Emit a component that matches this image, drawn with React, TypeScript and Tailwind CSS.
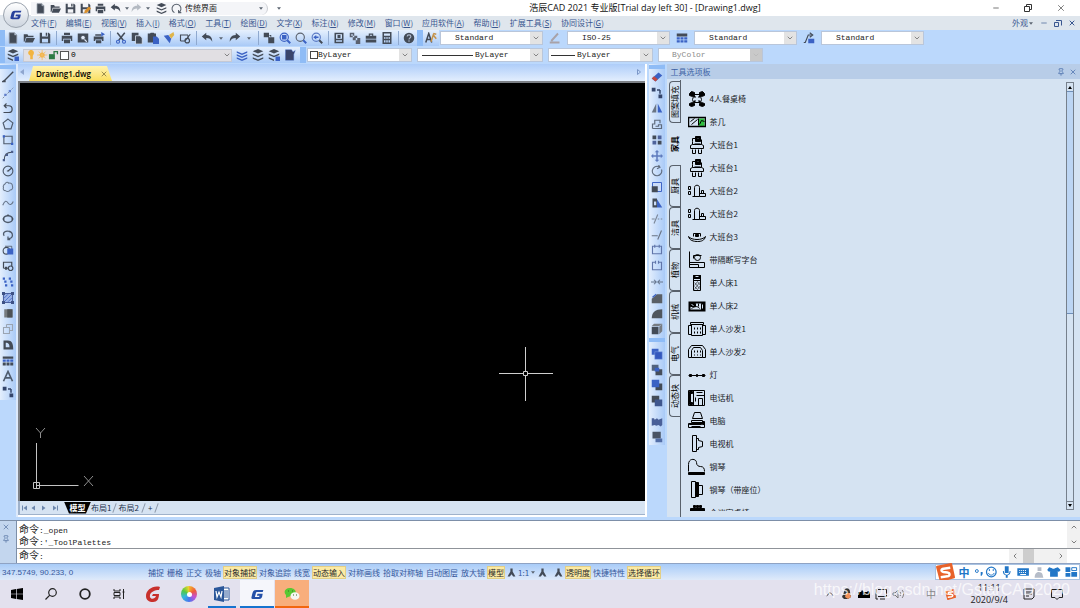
import type { ReactNode } from 'react';
import { ChevronDown, ChevronLeft, ChevronRight, ChevronUp, Minus, X, Pin } from 'lucide-react';

const D = '#434b57';
const B = '#3b62c4';

/* ---------- toolbar glyphs, drawn on a 16 x 16 grid ---------- */
const GLYPHS: Record<string, ReactNode> = {
  file: <path d="M3 1h7l3 3v11H3z M10 1v3h3" fill={D} stroke="#8a93a0" />,
  open: <path d="M1 3h5l1 2h7v2H4l-2 6H1z M4.500 8H16l-3 6H2.500z" fill={D} />,
  save: <path d="M1 1h3v5h8V1h1l2 2v12H1z M4 9v5h8V9z M9 1h2v4H9z" fill={D} fillRule="evenodd" />,
  saveas: (
    <>
      <path d="M1 1h3v5h8V1h1l2 2v12H1z M4 9v5h8V9z" fill={D} fillRule="evenodd" />
      <path d="M6 15l1-4 6-6 3 3-6 6z" fill="#d9902c" />
    </>
  ),
  print: <path d="M4 1h8v3H4z M1 5h14v7h-2V9H3v3H1z M4 10h8v5H4z" fill={D} />,
  preview: (
    <>
      <path d="M1 2h14v12H1z" fill={D} />
      <circle cx="8" cy="7.500" r="3" fill="#dfe9f8" stroke={D} />
      <path d="M10 10l3 3" stroke="#dfe9f8" strokeWidth="1.500" />
    </>
  ),
  plot: (
    <>
      <path d="M3 3h8v2H3z M1 6h13v6h-2v-2H3v2H1z M4 11h7v4H4z" fill={D} />
      <path d="M11 0l5 3-5 3z" fill={B} />
    </>
  ),
  scissors: (
    <>
      <path d="M3 1l8 10M13 1L5 11" stroke={D} strokeWidth="2" fill="none" />
      <circle cx="4" cy="13" r="2" stroke={B} strokeWidth="1.500" fill="none" />
      <circle cx="12" cy="13" r="2" stroke={B} strokeWidth="1.500" fill="none" />
    </>
  ),
  copy: (
    <>
      <path d="M1 1h9v11H1z" fill={D} />
      <path d="M6 5h6l3 3v8H6z" fill={D} stroke="#dfe9f8" />
    </>
  ),
  paste: (
    <>
      <path d="M1 2h3l1-1h4l1 1h2v12H1z" fill={D} />
      <path d="M8 6h5l3 3v7H8z" fill={B} />
    </>
  ),
  brush: (
    <>
      <path d="M1 5l6-1 4 5-2 6z" fill={B} />
      <path d="M8 4l6-4 1 4-4 5z" fill="#e0b54a" />
    </>
  ),
  block: (
    <>
      <path d="M2 12V4h10M2 12h6M12 4v5" stroke={D} strokeWidth="1.500" fill="none" />
      <circle cx="11" cy="11.500" r="3" fill="none" stroke={D} strokeWidth="1.500" />
      <path d="M8 12l7-9" stroke={D} strokeWidth="1.500" />
    </>
  ),
  undo: <path d="M1 6l6-5v3c6 0 8 4 8 9-2-4-4-5-8-5v3z" fill={D} />,
  redo: <path d="M15 6L9 1v3C3 4 1 8 1 13c2-4 4-5 8-5v3z" fill={D} />,
  redoDim: <path d="M15 6L9 1v3C3 4 1 8 1 13c2-4 4-5 8-5v3z" fill="#b4bac2" />,
  layers: (
    <>
      <path d="M8 0l7 3-7 3-7-3z" fill={D} />
      <path d="M1 6l7 3 7-3v2l-7 3-7-3z M1 11l7 3 7-3v2l-7 3-7-3z" fill={D} />
    </>
  ),
  layersBlue: (
    <path d="M1 3l7 3 7-3v2L8 8 1 5z M1 7l7 3 7-3v2l-7 3-7-3z M1 11l7 3 7-3v2l-7 3-7-3z" fill={B} />
  ),
  layerState: (
    <>
      <path d="M8 0l7 3-7 3-7-3z M1 6l7 3 7-3v2l-7 3-7-3z M1 11l7 3v2l-7-3z" fill={D} />
      <path d="M10 10h6v6h-6z" fill={B} />
    </>
  ),
  layerDoc: <path d="M2 1h8l2 3 3-2-2 5v8H2z" fill="#3a456b" stroke={B} strokeWidth=".5" />,
  refresh: <path d="M5 14a6.500 6.500 0 1 1 6 0M11 10v4h4" stroke="#59616d" strokeWidth="1.500" fill="none" />,
  pan: <path d="M1 1h7v6H1z M7 7h8v8H7z M8 4h3v3" fill={D} />,
  zoom: (
    <>
      <circle cx="7" cy="7" r="5.500" fill="#c9dbfa" stroke={B} strokeWidth="1.500" />
      <path d="M11 11l4 4" stroke={B} strokeWidth="2.500" />
      <path d="M4 4h6v6H4z" fill={B} />
    </>
  ),
  zoomPlain: (
    <>
      <circle cx="7" cy="7" r="5.500" fill="none" stroke="#5d6470" strokeWidth="1.500" />
      <path d="M11 11l4 4" stroke={B} strokeWidth="2.500" />
    </>
  ),
  zoomPrev: (
    <>
      <circle cx="7" cy="7" r="5.500" fill="none" stroke="#5d7bc4" strokeWidth="1.500" />
      <path d="M11 11l4 4" stroke={D} strokeWidth="2.500" />
      <path d="M3 7l4-3v2h3v2H7v2z" fill={B} />
    </>
  ),
  props: <path d="M2 1h12v14H2z M4 3v6h8V3z M6 4h4v4H6z M4 11v2h8v-2z" fill={D} fillRule="evenodd" />,
  hand: <path d="M1 1h6v6H1z M5 5h6v6H5z M9 8h6v8H9z M3 3v2h2V3z" fill="#5a6170" fillRule="evenodd" />,
  toolbox: <path d="M5 2h6v3h4v4H1V5h4z M6.500 3.500v1.500h3V3.500z M1 10h14v4H1z" fill={D} fillRule="evenodd" />,
  calc: (
    <path
      d="M2 0h12v16H2z M4 2v3h8V2z M4 7v2h2V7z M7 7v2h2V7z M10 7v2h2V7z M4 11v3h2v-3z M7 11v3h2v-3z M10 11v3h2v-3z"
      fill={D}
      fillRule="evenodd"
    />
  ),
  help: (
    <>
      <circle cx="8" cy="8" r="7" fill={D} />
      <path d="M5.500 6c0-3 5-3 5 0 0 2-2.500 2-2.500 4M8 11v2" stroke="#aeb9cc" strokeWidth="1.500" fill="none" />
    </>
  ),
  textStyle: (
    <>
      <path d="M1 14L5 2l4 12M2.500 10h5" stroke={D} strokeWidth="2" fill="none" />
      <path d="M8 13l3-9 4 5M11 2l4 1" stroke="#c59248" strokeWidth="2" fill="none" />
    </>
  ),
  dimStyle: <path d="M1 14h13M3 12L12 2" stroke="#a8a2a8" strokeWidth="2.500" fill="none" />,
  tableBlue: (
    <>
      <path d="M1 2h14v4H1z" fill={D} />
      <path d="M1 7h4v3H1z M6 7h4v3H6z M11 7h4v3h-4z M1 11h4v3H1z M6 11h4v3H6z M11 11h4v3h-4z" fill={B} />
    </>
  ),
  leader: (
    <>
      <path d="M1 14h2L7 4h4M9 1l4 3-4 3" stroke={D} strokeWidth="1.500" fill="none" />
      <path d="M7 9h8v6H7z" fill={B} />
    </>
  ),
  line: <path d="M1 14h3v-2zM3 13L13 3M12 4l3-3" stroke={D} strokeWidth="1.800" fill="none" />,
  xline: (
    <>
      <path d="M1 15L15 1" stroke="#7b8797" strokeWidth="1.200" strokeDasharray="3 1.500" />
      <path d="M3 9h3v3H3z M9 4h3v3H9z" fill="#5f7ecb" />
    </>
  ),
  pline: <path d="M2 14h7a4 4 0 0 0 0-9H4M6 2L3 5l3 3" stroke={D} strokeWidth="1.600" fill="none" />,
  polygon: <path d="M8 1.500l6.500 5L12 14.500H4L1.500 6.500z" stroke="#4f5b6c" strokeWidth="1.600" fill="none" />,
  rect: (
    <>
      <path d="M2.500 3h11v10h-11z" stroke="#4f5b6c" strokeWidth="1.500" fill="none" />
      <path d="M1 1.500h3v3H1z M12 11.500h3v3h-3z" fill={B} />
    </>
  ),
  arc: (
    <>
      <path d="M3 13C3 7 6 3 13 3" stroke={D} strokeWidth="1.500" fill="none" />
      <path d="M1 12h3v3H1z M5 5h3v3H5z M12 1h3v3h-3z" fill="#4c5f8e" />
    </>
  ),
  circle: (
    <>
      <circle cx="8" cy="8" r="6.500" stroke="#4f5b6c" strokeWidth="1.500" fill="none" />
      <path d="M8 8l5-4M6.500 8h3" stroke={D} strokeWidth="1.500" />
    </>
  ),
  cloud: (
    <path
      d="M4 4c1-3 4-3 5-1 3-1 5 1 5 4 1 3-1 5-3 5-2 3-5 2-6 1-3 0-4-2-3-4-1-2 0-4 2-5z"
      stroke="#68768a"
      strokeWidth="1.400"
      fill="none"
    />
  ),
  spline: <path d="M1 11c3-7 5-6 7-3s5 3 7-2" stroke="#68768a" strokeWidth="1.500" fill="none" />,
  ellipse: (
    <>
      <ellipse cx="8" cy="8" rx="6" ry="4.500" stroke="#4f5b6c" strokeWidth="2" fill="none" />
      <path d="M1 7h2v2H1z M13 7h2v2h-2z M7 2h2v2H7z" fill={D} />
    </>
  ),
  ellArc: <path d="M3 9C0 5 5 2 9 3c6 1 7 9 0 10M8 10v4h3" stroke="#4f5b6c" strokeWidth="1.700" fill="none" />,
  insert: (
    <>
      <circle cx="6" cy="9" r="4.500" stroke={D} strokeWidth="1.400" fill="none" />
      <path d="M4 3h9v5" stroke={D} fill="none" />
      <path d="M7 6h8v8H7z" fill={B} />
    </>
  ),
  mkblock: (
    <>
      <path d="M2 11V3h11v5M2 11h6" stroke={D} strokeWidth="1.600" fill="none" />
      <circle cx="11.500" cy="11" r="3" stroke={D} strokeWidth="1.500" fill="none" />
      <path d="M4 9h3v4H4z" fill={D} />
    </>
  ),
  points: <path d="M1 2h3v3H1z M3 6h3v3H3z M4 11h3v3H4z M9 2h3v3H9z M11 6h3v3h-3z M12 11h3v3h-3z" fill={B} />,
  hatch: (
    <>
      <path d="M2 2h12v12H2z" stroke="#4c62a0" strokeWidth="1.500" fill="#9bb3e6" />
      <path d="M3 8l5-5M3 13L13 3M8 13l5-5" stroke={B} strokeWidth="1" />
      <path d="M0 0h4v4H0z M12 0h4v4h-4z M0 12h4v4H0z M12 12h4v4h-4z" fill="#3e5286" />
    </>
  ),
  gradient: (
    <>
      <path d="M3 3h11v11H3z" fill="#777c80" />
      <path d="M7 3h7v11H7z" fill="#4d5256" />
    </>
  ),
  boundary: <path d="M2 6h8v8H2z M6 2h8v8h-4M6 6V2" stroke="#9aa4b2" strokeWidth="1.400" fill="none" />,
  region: <path d="M2 2h6c5 0 7 4 7 12H2z M5 5v6h5c0-4-1-6-5-6z" fill={D} fillRule="evenodd" />,
  table: (
    <>
      <path d="M1 2h14v3H1z" fill={D} />
      <path d="M1 6h4v3H1z M6 6h4v3H6z M11 6h4v3h-4z" fill={B} />
      <path d="M1 10h4v4H1z M6 10h4v4H6z M11 10h4v4h-4z" fill={D} />
    </>
  ),
  mtext: <path d="M2 15L8 2l6 13M4.500 10.500h7" stroke="#4f5b6c" strokeWidth="2.200" fill="none" />,
  nodes: <path d="M1 1h5v5H1z M10 10h5v5h-5z M8 3h4v1h1v5h-2V5H8z" fill="#34456b" />,
  eraser: (
    <>
      <path d="M1 10l9-8 5 4-9 8z" fill={B} />
      <path d="M1 10l3-3 5 4-3 3z" fill="#c4483f" />
    </>
  ),
  mirror: (
    <>
      <path d="M7 2v12H1z" fill="#6a7484" />
      <path d="M9 2v12h6z" fill={B} />
    </>
  ),
  offset: <path d="M2 14V8h3V3h7v4M2 14h12V9h-4v2H6" stroke="#5f6b7d" strokeWidth="1.600" fill="none" />,
  array: (
    <>
      <path d="M2 2h5v5H2z M9 9h5v5H9z" fill={D} />
      <path d="M9 2h5v5H9z M2 9h5v5H2z" fill="#4f639b" />
    </>
  ),
  move: (
    <path
      d="M8 0l3 3H9v4h4V5l3 3-3 3V9H9v4h2l-3 3-3-3h2V9H3v2L0 8l3-3v2h4V3H5z"
      fill="#5f7bbd"
    />
  ),
  rotate: <path d="M11 2.500A6.300 6.300 0 1 0 14 6M10 0l2 3-4 2" stroke="#5f6b7d" strokeWidth="1.500" fill="none" />,
  scale: (
    <>
      <path d="M2 2h12v12H2z" stroke={B} strokeWidth="1.300" fill="#cbdcf8" />
      <path d="M1 7h8v8H1z" fill={D} />
    </>
  ),
  stretch: (
    <>
      <path d="M2 2h6v12H2z" fill={D} />
      <path d="M8 3l7 11H8z" fill={B} />
      <path d="M4 6h3v5H4z" fill="#cbdcf8" />
    </>
  ),
  trim: <path d="M4 14L9 2M1 8h4M9 8h2M13 8h2" stroke="#7c8798" strokeWidth="1.500" fill="none" />,
  extend: <path d="M1 9h8M9 14l5-12" stroke="#6a7484" strokeWidth="1.500" fill="none" />,
  breakPt: <path d="M6 3H2v10h12V3h-4M6 1v4M10 1v4" stroke="#6075aa" strokeWidth="1.500" fill="none" />,
  rectOpen: <path d="M2 3h12v10H2zM5 1v4M11 1v4" stroke="#6075aa" strokeWidth="1.500" fill="none" />,
  join: <path d="M0 8h6M16 8h-6M4 5l3 3-3 3M12 5L9 8l3 3" stroke="#65748c" strokeWidth="1.400" fill="none" />,
  chamfer: (
    <>
      <path d="M1 15V9l7-6h7v12z" fill="#5a5f66" />
      <path d="M2 7l5-4" stroke={B} strokeWidth="1.500" />
    </>
  ),
  fillet: <path d="M1 15C1 7 6 3 15 3v12z" fill="#4f565f" />,
  explode: (
    <>
      <path d="M1 5h9v10H1z" fill={D} />
      <path d="M1 4l3-3h11l-4 3z M11 5l4-4v10l-4 4z" fill="#777c83" />
    </>
  ),
  orderA: (
    <>
      <path d="M1 1h9v8H1z" fill={B} />
      <path d="M5 5h10v10H5z" fill="#3458bd" stroke="#89a8e8" strokeWidth=".6" />
    </>
  ),
  orderB: (
    <>
      <path d="M1 1h9v8H1z" fill="#52637e" />
      <path d="M6 7h9v8H6z" fill="#464e5b" />
      <path d="M5 5h6v5H5z" fill={B} />
    </>
  ),
  orderC: (
    <>
      <path d="M6 6h9v9H6z" fill={D} />
      <path d="M1 1h10v10H1z" fill={B} />
    </>
  ),
  orderD: (
    <>
      <path d="M1 1h10v9H1z" fill={D} />
      <path d="M5 6h10v9H5z" fill="#3f578f" />
    </>
  ),
  flag: <path d="M1 3h3l1 2 3-2 2 2 5-2v9l-2 2-3-2-3 1-2-1-4 1z" fill="#4a6099" />,
  stack: (
    <>
      <path d="M2 1h11v9H2z" fill="#4a5465" />
      <path d="M6 10h9v5H6z" fill="#526da6" />
    </>
  ),
  person: <path d="M6 1h4v5l5 9h-4l-3-4-3 4H1l5-9z" fill={D} />,
};

function Glyph({ name, size = 'size-3' }: { name: string; size?: string }) {
  return (
    <svg viewBox="0 0 16 16" className={`${size} shrink-0`} fill="none" aria-hidden="true">
      {GLYPHS[name]}
    </svg>
  );
}

function Tools({ names }: { names: string[] }) {
  return (
    <>
      {names.map((n, i) => (
        <button key={i} aria-label={n} className="flex h-4 w-4 shrink-0 items-center justify-center">
          <Glyph name={n} />
        </button>
      ))}
    </>
  );
}

function Caret({ width = 'w-3' }: { width?: string }) {
  return (
    <span className={`flex shrink-0 justify-center text-[#5d6672] ${width}`}>
      <svg viewBox="0 0 6 4" className="h-[3px] w-1" aria-hidden="true">
        <path d="M0 0h6L3 4z" fill="currentColor" />
      </svg>
    </span>
  );
}

const Sep = () => (
  <span className="flex w-1.5 shrink-0 justify-center">
    <span className="h-3.5 w-px bg-[#8fa9cf]" />
  </span>
);

const Grip = () => <span className="h-4 w-1.5 shrink-0 bg-[#8fbcf6]" />;

function Combo({
  label,
  value,
  width,
  indent,
  lead,
  disabled,
}: {
  label: string;
  value: string;
  width: string;
  indent: string;
  lead?: ReactNode;
  disabled?: boolean;
}) {
  return (
    <div className={`relative flex h-[14px] shrink-0 items-center border border-[#b9c6da] bg-white ${width}`}>
      {lead}
      <select
        aria-label={label}
        disabled={disabled}
        defaultValue={value}
        className={`h-full min-w-0 flex-1 appearance-none bg-transparent font-['Liberation_Mono',monospace] text-[8px] leading-3 outline-none ${indent} ${disabled ? 'text-[#8b8b8b]' : 'text-[#222]'}`}
      >
        <option>{value}</option>
      </select>
      <span
        className={`pointer-events-none flex h-full w-3 items-center justify-center ${disabled ? 'bg-[#c9c9c9] text-[#b5b5b5]' : 'bg-[#e3e3e3] text-[#555]'}`}
      >
        <ChevronDown className="size-2" />
      </span>
    </div>
  );
}

/* ---------- furniture thumbnails, drawn on an 18 x 18 grid ---------- */
const THUMBS: Record<string, ReactNode> = {
  dining: (
    <>
      <path d="M5 4h7v2l1 3-1 3H5L4 9l1-3z" />
      <path
        d="M1 3l2-2 3 1v3l-2 1-3-1z M11 2l3-1 2 2v2l-3 1-2-1z M1 13l3-1 2 1v2l-3 1-2-1z M11 13l2-1 3 1v2l-2 1-3-1z"
        fill="#000"
      />
      <path d="M5 5l2 2M12 5l-2 2M5 12l2-2M12 12l-2-2" strokeWidth="1.500" />
    </>
  ),
  tea: (
    <>
      <path d="M10 5h6v8h-6z" fill="#2fc040" stroke="none" />
      <path d="M0 4h17v9H0z" strokeWidth="1.500" />
      <path d="M3 11l6-5M2 8l4-3M10 5v7M11 11l2-4 3 1" />
    </>
  ),
  desk1: (
    <>
      <path d="M4 5V2h3M4 5v3M13 3v5M2 12V9l2-1h9l2 1v3zM4 13v4h3v-4M10 13v4h3v-4" />
      <path d="M7 0h5v5H7z" fill="#000" />
      <path d="M6 7h6M9 2h1" stroke="#55606c" />
    </>
  ),
  desk2: <path d="M0 4h2v3H0z M0 9h2v3H0z M6 14V5c0-3 5-3 5 0v9 M13 8h2v3h-2z M11 14h6M11 11h6v3M4 14h7" />,
  desk3: (
    <>
      <path d="M0 8c3 4 14 4 17 0-1 4-4 5-8 5s-8-1-9-5z M5 8V5h7v3" />
      <path d="M7 6h3v2H7z" fill="#000" />
    </>
  ),
  cubicle: (
    <>
      <path d="M1 0v16h15v-5H1M1 13h9v3" />
      <circle cx="9" cy="6" r="3" />
      <path d="M5 4h8M5 4v3" />
    </>
  ),
  bed1: (
    <>
      <path d="M5 1h7v15H5zM5 6h7" />
      <path d="M5 1h7v3H5z" fill="#000" />
      <path d="M6 15l5-7M6 11l3-4M9 15l3-4M6 8l5 6M6 12l3 3M9 7l3 4" strokeWidth=".5" />
      <path d="M7 2h3" stroke="#d5e3f2" />
    </>
  ),
  bed2: (
    <>
      <path d="M1 5h15v8H1z" strokeWidth="2" />
      <path d="M2 6h5v3H2z M13 6h3v7h-3z" fill="#000" />
      <path d="M3 11c3-2 6-3 8 0M10 6v3" />
      <path d="M14 7v4M3 7l2 1" stroke="#d5e3f2" />
    </>
  ),
  sofa1: (
    <>
      <path d="M2 2h13v2H2z M0 5h3v9H0z M14 5h3v9h-3z M3 4v11h11V4" />
      <path d="M6 7v2M9 7v2M12 7v2M6 11v2M9 11v2M12 11v2" />
    </>
  ),
  sofa2: (
    <>
      <path d="M0 14V6l3-4h11l3 4v8h-3V7l-2-3H5L3 7v7z M3 14h11" />
      <path d="M6 7v2M9 7v2M12 7v2M6 11v1M9 11v1M12 11v1" />
    </>
  ),
  lamp: (
    <>
      <path d="M0 9h17" />
      <path d="M1 8h2v2H1z M8 8h1v2H8z M14 8h2v2h-2z" fill="#000" />
    </>
  ),
  phone: (
    <>
      <path d="M0 1h16v15H0z M5 1v15M8 6h8M10 9h4v7h-4z M8 3h6" />
      <path d="M1 2h3v2H1z M1 13h3v2H1z M1 4h1v9H1z" fill="#000" />
      <path d="M7 8v4" />
    </>
  ),
  computer: (
    <>
      <path d="M6 0h6l2 6H4z M3 8h11v2H3z M0 11h16v4H0z" />
      <path d="M1 11h12v1H1z M14 9h2v3h-2z" fill="#000" />
      <path d="M3 14h9" />
    </>
  ),
  tv: <path d="M4 0h4v16H4z M8 3h2v2l4 1v5l-4 1v2H8" />,
  piano: (
    <>
      <path d="M0 13V6c0-7 8-6 8-2 0 3 2 4 4 4 3 0 4 2 4 5" />
      <path d="M0 14h16v2H0z" fill="#000" />
    </>
  ),
  pianoSeat: (
    <>
      <path d="M3 0h4v16H3z M10 4h4v9h-4z" />
      <path d="M7 1h3v14H7z" fill="#000" />
    </>
  ),
  meeting: <path d="M5 1h2v2H5z M8 1h2v2H8z M11 1h2v2h-2z M2 4h14v10H2z" fill="#000" />,
};

const ITEMS: [string, string][] = [
  ['dining', '4人餐桌椅'],
  ['tea', '茶几'],
  ['desk1', '大班台1'],
  ['desk1', '大班台1'],
  ['desk2', '大班台2'],
  ['desk2', '大班台2'],
  ['desk3', '大班台3'],
  ['cubicle', '带隔断写字台'],
  ['bed1', '单人床1'],
  ['bed2', '单人床2'],
  ['sofa1', '单人沙发1'],
  ['sofa2', '单人沙发2'],
  ['lamp', '灯'],
  ['phone', '电话机'],
  ['computer', '电脑'],
  ['tv', '电视机'],
  ['piano', '钢琴'],
  ['pianoSeat', '钢琴（带座位）'],
  ['meeting', '会议室桌椅'],
];

const MENUS: [string, string][] = [
  ['文件', 'F'], ['编辑', 'E'], ['视图', 'V'], ['插入', 'I'], ['格式', 'O'], ['工具', 'T'], ['绘图', 'D'],
  ['文字', 'X'], ['标注', 'N'], ['修改', 'M'], ['窗口', 'W'], ['应用软件', 'A'], ['帮助', 'H'],
  ['扩展工具', 'S'], ['协同设计', 'G'],
];

const LEFT_TOOLS = [
  'line', 'xline', 'pline', 'polygon', 'rect', 'arc', 'circle', 'cloud', 'spline', 'ellipse', 'ellArc',
  'insert', 'mkblock', 'points', 'hatch', 'gradient', 'boundary', 'region', 'table', 'mtext', 'nodes',
];

const RIGHT_TOOLS = [
  'eraser', 'nodes', 'mirror', 'offset', 'array', 'move', 'rotate', 'scale', 'stretch', 'trim', 'extend',
  'rectOpen', 'breakPt', 'join', 'chamfer', 'fillet', 'explode',
];

function ToolColumn({ names, height }: { names: string[]; height: string }) {
  return (
    <div className={`flex flex-col ${height}`}>
      {names.map((n, i) => (
        <button key={i} aria-label={n} className="flex min-h-0 flex-1 items-center justify-center">
          <Glyph name={n} />
        </button>
      ))}
    </div>
  );
}

function GLogo({ className, color }: { className: string; color: string }) {
  return (
    <svg viewBox="0 0 20 16" className={className} aria-hidden="true">
      <path
        d="M19 1H8C4 1 3 3 2 7l-1 4c-1 3 0 4 3 4h9c2 0 3-1 4-3l1-5h-8l-1 3h4l-.5 2H6l1.500-6c.3-1.500 1-2 2-2H18z"
        fill={color}
      />
    </svg>
  );
}

function TitleArea() {
  return (
    <header className="flex h-[30px] shrink-0 bg-[#dfe6ed]">
      <div className="flex w-[31px] shrink-0 items-center justify-center bg-gradient-to-b from-white from-50% to-[#dfe6ed] to-50%">
        <button
          aria-label="应用程序菜单"
          className="flex size-[26px] items-center justify-center rounded-full border border-[#9aa3ae] bg-gradient-to-b from-white to-[#ccd4de]"
        >
          <GLogo className="h-2.5 w-3" color="#27419c" />
        </button>
      </div>
      <div className="flex min-w-0 flex-1 flex-col">
        <div className="flex h-4 shrink-0 items-center bg-white">
          <div className="flex h-[13px] w-[237px] shrink-0 items-center rounded-r-full border-r border-[#c9ccd2] bg-[#f4f5f8] pl-0.5">
            {['file', 'open', 'save', 'saveas', 'print', 'undo'].map((n) => (
              <button key={n} aria-label={n} className="flex w-[15px] shrink-0 justify-center">
                <Glyph name={n} size="size-[11px]" />
              </button>
            ))}
            <Caret width="w-2" />
            <Glyph name="redoDim" size="size-[11px]" />
            <Caret />
            <button aria-label="layers" className="flex w-[15px] shrink-0 justify-center">
              <Glyph name="layers" size="size-[11px]" />
            </button>
            <button aria-label="refresh" className="flex w-[15px] shrink-0 justify-center">
              <Glyph name="refresh" size="size-[11px]" />
            </button>
            <select
              aria-label="工作空间"
              className="ml-px min-w-0 flex-1 appearance-none bg-transparent text-[8px] leading-3 text-[#1c1c1c] outline-none"
            >
              <option>传统界面</option>
            </select>
            <Caret />
          </div>
          <span className="flex w-[22px] justify-center">
            <Caret />
          </span>
          <h1 className="flex-1 pl-[22px] text-center font-['Open_Sans','Noto_Sans_CJK_SC',sans-serif] text-[9px] leading-4 text-[#111]">
            浩辰CAD 2021 专业版[Trial day left 30] - [Drawing1.dwg]
          </h1>
          <div className="flex w-[102px] items-center justify-between pr-3.5 pl-3.5 text-[#333]">
            <Minus className="size-2" />
            <svg viewBox="0 0 8 8" className="size-2" fill="none" stroke="currentColor" aria-hidden="true">
              <path d="M.5 2.500h5v5h-5z M2.500 2.500v-2h5v5h-2" />
            </svg>
            <X className="size-2.5" strokeWidth={1.5} />
          </div>
        </div>
        <nav className="flex h-[14px] items-center gap-[9px] pr-1 text-[8px] leading-3 text-[#3a5790]">
          {MENUS.map(([t, k]) => (
            <a key={k} href={`#${k}`} className="shrink-0 whitespace-nowrap">
              {t}(<u>{k}</u>)
            </a>
          ))}
          <div className="ml-auto flex items-center gap-1.5">
            <span className="flex items-center">
              外观
              <Caret width="w-1.5" />
            </span>
            <Minus className="size-2" />
            <svg viewBox="0 0 8 8" className="size-2" fill="none" stroke="currentColor" aria-hidden="true">
              <path d="M.5 3.500h4v4h-4z M2 1.500h5.500v5" />
            </svg>
            <X className="size-2" strokeWidth={3} />
          </div>
        </nav>
      </div>
    </header>
  );
}

const BAR = 'flex h-4 items-center bg-gradient-to-b from-[#e6f0fd] to-[#a9caf7]';

function Toolbars() {
  return (
    <div className="flex shrink-0 flex-col gap-px bg-[#bbd8fc] pb-px">
      <div className="flex h-4 items-center">
        <div className={BAR}>
          <span className="h-4 w-[5px] shrink-0 bg-[#8fbcf6]" />
          <Tools names={['file', 'open', 'save']} />
          <Sep />
          <Tools names={['print', 'preview', 'plot']} />
          <Sep />
          <Tools names={['scissors', 'copy', 'paste', 'brush', 'block']} />
          <Sep />
          <Tools names={['undo']} />
          <Caret />
          <Tools names={['redo']} />
          <Caret />
          <Sep />
          <Tools names={['pan', 'zoom', 'zoomPlain', 'zoomPrev']} />
          <Sep />
          <Tools names={['props', 'hand', 'toolbox', 'calc']} />
          <Sep />
          <Tools names={['help']} />
          <Grip />
          <Tools names={['textStyle']} />
        </div>
        <div className="flex items-center pl-px">
          <Combo label="文字样式" value="Standard" width="w-[103px]" indent="pl-[14px]" />
          <span className="flex w-6 justify-center"><Glyph name="dimStyle" /></span>
          <Combo label="标注样式" value="ISO-25" width="w-[103px]" indent="pl-[14px]" />
          <span className="flex w-6 justify-center"><Glyph name="tableBlue" /></span>
          <Combo label="表格样式" value="Standard" width="w-[103px]" indent="pl-[14px]" />
          <span className="flex w-6 justify-center"><Glyph name="leader" /></span>
          <Combo label="引线样式" value="Standard" width="w-[103px]" indent="pl-[14px]" />
        </div>
      </div>
      <div className="flex h-4 items-center">
        <div className={BAR}>
          <span className="h-4 w-[5px] shrink-0 bg-[#8fbcf6]" />
          <Tools names={['layerState']} />
          <div className="ml-0.5 flex h-[13px] w-[209px] shrink-0 items-center border border-[#c5c9d4] bg-[#e1dfe3] pl-0.5">
            <svg viewBox="0 0 40 14" className="h-3 w-[34px] shrink-0" aria-hidden="true">
              <path d="M6 1c3 0 4 3 3 5L8 8v4H5V8L3 6C2 4 3 1 6 1z" fill="#f2b440" />
              <circle cx="19" cy="7" r="3" fill="#f0b040" />
              <path d="M19 1v12M13 7h12M15 3l8 8M23 3l-8 8" stroke="#f3bd62" />
              <path d="M27 6h7v6h-7z" fill="#2c7a45" />
              <path d="M33 6V3h4v3" stroke="#2c7a45" strokeWidth="1.500" fill="none" />
            </svg>
            <span className="size-[9px] shrink-0 border border-[#555] bg-white" />
            <select
              aria-label="图层"
              className="min-w-0 flex-1 appearance-none pl-0.5 font-['Liberation_Mono',monospace] text-[8px] leading-3 outline-none"
            >
              <option>0</option>
            </select>
            <ChevronDown className="size-2 text-[#555]" />
          </div>
          <span className="w-0.5" />
          <Tools names={['layersBlue', 'layers', 'layerState', 'layerDoc']} />
          <span className="w-0.5" />
          <Grip />
        </div>
        <div className="flex items-center gap-[5px] pl-px">
          <Combo
            label="颜色"
            value="ByLayer"
            width="w-[105px]"
            indent="pl-0"
            lead={<span className="ml-0.5 size-2 shrink-0 border border-[#444]" />}
          />
          <Combo
            label="线型"
            value="ByLayer"
            width="w-[126px]"
            indent="pl-0.5"
            lead={<span className="ml-1 h-px w-[51px] shrink-0 bg-[#333]" />}
          />
          <Combo
            label="线宽"
            value="ByLayer"
            width="w-[105px]"
            indent="pl-0.5"
            lead={<span className="ml-0.5 h-px w-6 shrink-0 bg-[#333]" />}
          />
          <Combo label="打印样式" value="ByColor" width="w-[105px]" indent="pl-[13px]" disabled />
        </div>
      </div>
    </div>
  );
}

function DrawingArea() {
  return (
    <section className="flex min-w-0 flex-1 flex-col border-r-2 border-b-2 border-white">
      <div className="flex h-[17px] shrink-0 items-end bg-gradient-to-b from-[#aecdf9] to-[#e3eefd]">
        <svg viewBox="0 0 4 6" className="mb-1.5 ml-0.5 h-1.5 w-1" aria-hidden="true">
          <path d="M4 0v6L0 3z" fill="#8fa6cf" />
        </svg>
        <div className="ml-[5px] flex h-[15px] w-[83px] items-center justify-between bg-gradient-to-b from-[#fff3b0] to-[#fbdf5c] pr-1 pl-[7px] font-['Open_Sans',sans-serif] text-[8px] leading-3 font-semibold whitespace-nowrap text-black [clip-path:polygon(4px_0,78px_0,100%_100%,0_100%)]">
          Drawing1.dwg
          <X className="size-2 text-[#6b6030]" />
        </div>
        <svg viewBox="0 0 4 6" className="mr-1 mb-1.5 ml-auto h-1.5 w-1" aria-hidden="true">
          <path d="M.5.500v5L3.500 3z" fill="none" stroke="#7b97c8" />
        </svg>
      </div>
      <div className="relative min-h-0 flex-1 border-t-2 border-l-2 border-[#7d8187] bg-black">
        <svg
          viewBox="0 0 56 56"
          className="absolute top-[63%] left-[76.4%] size-14"
          stroke="#cfcfcf"
          fill="none"
          aria-hidden="true"
        >
          <path d="M1 27.500h24M30 27.500h25M27.500 1v24M27.500 30v25M25.500 25.500h4v4h-4z" />
        </svg>
        <svg
          viewBox="0 0 66 66"
          className="absolute bottom-2 left-3 size-[66px]"
          stroke="#c4c4c4"
          fill="none"
          aria-hidden="true"
        >
          <path d="M4.500 16v45M1.500 55.500h6v6h-6zM4.500 58.500h42" />
          <path d="M4 1l4.500 5L13 1M8.500 6v5M52 49l9 10M61 49l-9 10" stroke="#8f8f8f" />
        </svg>
      </div>
      <div className="flex h-[14px] shrink-0 items-center border-b border-l-2 border-[#9fb2cb] bg-[#d6e3f2] text-[8px] leading-3 text-[#23304a]">
        <svg viewBox="0 0 44 8" className="h-2 w-11 shrink-0" fill="#6d87ad" aria-hidden="true">
          <path d="M2 1.500h1v5H2z M7 1.500v5L3.500 4z M15 1.500v5L11.500 4z M22 1.500v5L25.500 4z M33 1.500v5L36.500 4z M37 1.500h1v5h-1z" />
        </svg>
        <button className="h-3 w-[27px] bg-black text-center font-bold text-white [clip-path:polygon(0_0,100%_0,22px_100%,5px_100%)]">
          模型
        </button>
        <button>布局1</button>
        <span className="mx-[3px] h-2.5 w-px rotate-20 bg-[#8d99aa]" />
        <button>布局2</button>
        <span className="mx-1 h-2.5 w-px rotate-20 bg-[#8d99aa]" />
        <button>+</button>
        <span className="mx-1 h-2.5 w-px rotate-20 bg-[#8d99aa]" />
      </div>
    </section>
  );
}

const TABS = ['图案填充', '家具', '厨具', '洁具', '植物', '机械', '电气', '动态块'];

function Palette() {
  return (
    <aside className="flex w-[38.2%] shrink-0 flex-col bg-[#d5e3f2]">
      <div className="flex h-[15px] shrink-0 items-center bg-[#b8cde8] px-[3px] text-[8px] leading-3 text-[#3d63a5]">
        <h2>工具选项板</h2>
        <Pin className="mr-1 ml-auto size-2" />
        <X className="size-2" />
      </div>
      <div className="flex min-h-0 flex-1 pt-px">
        <div className="ml-0.5 flex w-3 shrink-0 flex-col border-r border-[#59616b] pt-px">
          {TABS.map((t) => (
            <button
              key={t}
              className={`flex h-[42px] shrink-0 items-center justify-center text-[8px] leading-3 ${
                t === '家具' ? '-mr-px bg-[#d5e3f2] font-bold' : 'rounded-l-sm border border-r-0 border-[#59616b]'
              }`}
            >
              <span className="rotate-180 [text-orientation:sideways] [writing-mode:vertical-rl]">{t}</span>
            </button>
          ))}
        </div>
        <ul className="mb-1.5 min-w-0 flex-1 overflow-hidden pt-[7px] pl-[7px]">
          {ITEMS.map(([k, t], i) => (
            <li key={i} className="flex h-[23px] items-center gap-[3px] text-[8px] leading-3 text-[#16191d]">
              <svg viewBox="0 0 18 18" className="size-[18px] shrink-0" fill="none" stroke="#000" aria-hidden="true">
                <g transform="translate(.5 .5)">{THUMBS[k]}</g>
              </svg>
              <span className="whitespace-nowrap">{t}</span>
            </li>
          ))}
        </ul>
        <div className="mt-0.5 mr-1.5 mb-[7px] flex w-2 shrink-0 flex-col border border-[#76808c] bg-[#d5e3f2]">
          <button aria-label="向上滚动" className="flex h-2 items-center justify-center">
            <svg viewBox="0 0 4 3" className="h-[3px] w-1"><path d="M2 0l2 3H0z" /></svg>
          </button>
          <span className="h-[223px] border-y border-[#6f8fb8] bg-[#bcd5f3]" />
          <button aria-label="向下滚动" className="mt-auto flex h-2 items-center justify-center border-t border-[#76808c]">
            <svg viewBox="0 0 4 3" className="h-[3px] w-1"><path d="M0 0h4L2 3z" /></svg>
          </button>
        </div>
      </div>
    </aside>
  );
}

const TopGrip = () => <span className="mt-px h-1 w-full shrink-0 bg-[#8fbcf6]" />;
const COLUMN = 'flex w-4 shrink-0 flex-col self-start bg-gradient-to-r from-[#e3eefd] to-[#a9caf7]';

function CommandLine() {
  return (
    <section className="flex h-[43px] shrink-0 border-t border-[#7d8fa8] bg-[#c3d6ee]">
      <div className="flex w-4 shrink-0 flex-col items-start gap-1 pt-0.5 pl-0.5 text-[#4e6c9d]">
        <X className="size-2" />
        <Pin className="size-2" />
      </div>
      <div className="flex min-w-0 flex-1 flex-col border-l border-[#7d8fa8] bg-white font-['Liberation_Mono',monospace] text-[8px] text-[#222]">
        <div className="flex h-7 shrink-0 border-b border-[#8f9399]">
          <div className="flex-1 pt-0.5 pl-0.5 leading-3">
            <p className="h-3"><span className="font-['Noto_Sans_CJK_SC',sans-serif] text-[10px]">命令</span>:_open</p>
            <p className="h-3"><span className="font-['Noto_Sans_CJK_SC',sans-serif] text-[10px]">命令</span>:'_ToolPalettes</p>
          </div>
          <div className="flex w-[13px] flex-col items-center justify-between bg-[#f1f1f1] py-0.5 text-[#444]">
            <ChevronUp className="size-2" />
            <ChevronDown className="size-2" />
          </div>
        </div>
        <div className="flex min-h-0 flex-1 items-center">
          <label htmlFor="cmd" className="pl-0.5 leading-3">
            <span className="font-['Noto_Sans_CJK_SC',sans-serif] text-[10px]">命令</span>:
          </label>
          <input id="cmd" className="h-3 min-w-0 flex-1 bg-transparent outline-none" />
          <div className="mr-[13px] flex h-full w-[58px] items-center justify-between bg-[#f1f1f1] px-0.5 text-[#444]">
            <ChevronLeft className="size-2" />
            <span className="mr-auto ml-1 h-full w-[11px] bg-[#cdcdcd]" />
            <ChevronRight className="size-2" />
          </div>
        </div>
      </div>
    </section>
  );
}

const STATUS: [string, boolean][] = [
  ['捕捉', false], ['栅格', false], ['正交', false], ['极轴', false], ['对象捕捉', true], ['对象追踪', false],
  ['线宽', false], ['动态输入', true], ['对称画线', false], ['拾取对称轴', false], ['自动图层', false],
  ['放大镜', false], ['模型', true],
];

function Toggle({ text, on }: { text: string; on: boolean }) {
  return (
    <button
      className={`shrink-0 whitespace-nowrap ${on ? 'bg-[#fbeaa4] text-[#2b2b2b] outline outline-[#e3cf86]' : 'text-[#36589c]'}`}
    >
      {text}
    </button>
  );
}

function SogouS({ className }: { className: string }) {
  return (
    <svg viewBox="0 0 20 20" className={className} aria-hidden="true">
      <path d="M1 4l15-3 3 14-14 4z" fill="#e8622a" stroke="#e8622a" strokeWidth="2" strokeLinejoin="round" />
      <path d="M15 5l-7 1c-3 .5-3 3 0 3.500l4 .5c3 .5 3 3.500 0 4l-7 1" stroke="#fff" strokeWidth="2.500" fill="none" />
    </svg>
  );
}

function StatusBar() {
  return (
    <section className="flex h-[17px] shrink-0 items-center border-t border-[#8fa3c4] bg-gradient-to-b from-[#a9ccf8] to-[#dfeafa] text-[8px] leading-[11px]">
      <span className="w-[148px] shrink-0 pl-0.5 font-['Liberation_Sans',sans-serif] text-[#36589c]">
        347.5749, 90.233, 0
      </span>
      <div className="flex shrink-0 items-center gap-[3px]">
        {STATUS.map(([t, on]) => (
          <Toggle key={t} text={t} on={on} />
        ))}
        <span className="flex items-center gap-0.5 text-[#36589c]">
          <Glyph name="person" size="size-[9px]" />
          1:1
          <Caret width="w-1" />
        </span>
        <Glyph name="person" size="size-[9px]" />
        <span className="w-px" />
        <Glyph name="person" size="size-[9px]" />
        <Toggle text="透明度" on />
        <Toggle text="快捷特性" on={false} />
        <Toggle text="选择循环" on />
      </div>
      <div className="ml-auto flex h-4 shrink-0 items-center gap-[3px] border border-[#a9c3e2] bg-white text-[#2176c7]">
        <SogouS className="size-[19px]" />
        <span className="w-3 text-center text-[11px] leading-3 font-bold">中</span>
        <svg viewBox="0 0 110 14" className="h-[14px] w-[106px]" fill="currentColor" aria-hidden="true">
          <circle cx="4" cy="6" r="1.500" fill="none" stroke="currentColor" />
          <path d="M8 7h2v2l-1 2H8z" />
          <circle cx="19" cy="7" r="5" fill="none" stroke="currentColor" strokeWidth="1.300" />
          <path d="M17 4v2M21 4v2M16 8c1 3 5 3 6 0" stroke="currentColor" fill="none" />
          <path d="M33 1h4v7h-4z M31 6h1c0 5 6 5 6 0h1c0 3-1 4-3 4.500V13h-2v-2.500C32 10 31 9 31 6z" />
          <path d="M46 3h12v8H46z M48 5v1h1V5z M50 5v1h1V5z M52 5v1h1V5z M54 5v1h1V5z M48 7v1h1V7z M50 7v1h1V7z M52 7v1h1V7z M54 7v1h1V7z M49 9v1h6V9z" fillRule="evenodd" />
          <path d="M67 2h4v4h-4z M64 13c0-7 6-7 8-4l1 4z" fill="#b5bcc8" />
          <path d="M80 2l3 1c1 1 2 1 3 0l3-1 3 3-2 2-1-1v6h-8V6l-1 1-2-2z" transform="translate(-1 0)" />
          <path d="M96 2h5v5h-5z M102 7h6v5h-6z M96 8h5v4h-5z" />
          <path d="M102.500 2.500h5v3h-5z" fill="none" stroke="currentColor" />
        </svg>
      </div>
    </section>
  );
}

function Taskbar() {
  return (
    <footer className="relative flex h-7 shrink-0 items-center bg-[#e3e1ee] text-[#222]">
      {[
        <svg key="w" viewBox="0 0 12 12" className="size-3"><path d="M0 2l5-1v4.700H0z M5.700.900L12 0v5.700H5.700z M0 6.300h5V11l-5-1z M5.700 6.300H12V12l-6.300-1z" /></svg>,
        <svg key="s" viewBox="0 0 12 12" className="size-3" fill="none" stroke="currentColor" strokeWidth="1.200"><circle cx="7.500" cy="4.500" r="3.800" /><path d="M4.800 7.200L.5 11.500" /></svg>,
        <svg key="c" viewBox="0 0 12 12" className="size-3" fill="none" stroke="currentColor" strokeWidth="1.800"><circle cx="6" cy="6" r="4.800" /></svg>,
        <svg key="t" viewBox="0 0 12 12" className="size-3" fill="none" stroke="currentColor"><path d="M1 1v2h6V1M1 11V9h6v2M1 4.500h6v3H1zM10.500 1v10M9.500 4h2" /></svg>,
      ].map((icon, i) => (
        <button key={i} aria-label={['开始', '搜索', 'Cortana', '任务视图'][i]} className="flex h-full w-[34px] items-center justify-center">
          {icon}
        </button>
      ))}
      <button aria-label="浩辰看图" className="flex h-full w-[34px] items-center justify-center">
        <svg viewBox="0 0 16 16" className="size-4">
          <path d="M15 1C8-1 1 4 1 10c0 4 3 6 7 6 4 0 6-3 6-8H8L7 10h4c-1 3-5 4-6 1C4 6 10 4 14 4z" fill="#c8302c" />
        </svg>
      </button>
      <button aria-label="浏览器" className="flex h-full w-[38px] items-center justify-center">
        <span className="flex size-4 items-center justify-center rounded-full bg-[conic-gradient(#f4b72a,#ef5a3c,#c253d6,#4876ee,#34b8dc,#52c945,#f4d52a)]">
          <span className="size-[5px] rounded-full bg-white" />
        </span>
      </button>
      <button aria-label="Word" className="flex h-full w-7 items-center justify-center border-b-2 border-[#1673cf] pt-0.5">
        <svg viewBox="0 0 16 16" className="size-4">
          <path d="M9 2h6v12H9z" fill="#fff" stroke="#2b579a" />
          <path d="M10 5h4M10 7h4M10 9h4M10 11h4" stroke="#2b579a" />
          <path d="M0 2l10-2v16L0 14z" fill="#2b579a" />
          <path d="M2 5l1 6 2-5 2 5 1-6" stroke="#fff" strokeWidth="1.200" fill="none" />
        </svg>
      </button>
      <button aria-label="浩辰CAD" className="ml-1 flex h-full w-[34px] items-center justify-center border-b-2 border-[#1673cf] bg-[#f5f6fb] pt-0.5">
        <GLogo className="h-[11px] w-[13px]" color="#2450a8" />
      </button>
      <button aria-label="微信" className="ml-px flex h-full w-[34px] items-center justify-center border-b-2 border-[#f2660f] bg-[#f8ae7c] pt-0.5">
        <svg viewBox="0 0 16 14" className="h-3.5 w-4">
          <path d="M6 1c7 0 8 8 1 8L4 10l-2 1V8C-1 5 1 1 6 1z" fill="#59c832" />
          <ellipse cx="11" cy="9" rx="4.500" ry="3.800" fill="#f5f7f2" />
          <path d="M4 4h1M8 4h1M9 8h1M12 8h1" stroke="#3a6a2a" />
        </svg>
      </button>
      <div className="ml-auto flex items-center pr-[17px]">
        <span className="flex w-[17px] justify-center"><ChevronUp className="size-3" /></span>
        <span className="flex w-[17px] justify-center">
          <svg viewBox="0 0 10 12" className="h-3 w-2.5"><path d="M2 4c0-5 6-5 6 0l1 5-3 2H2L0 9z" fill="#333" /><path d="M4 5h4l1 4-3 2-3-2z" fill="#f0905a" /></svg>
        </span>
        <span className="flex w-[17px] justify-center">
          <svg viewBox="0 0 12 8" className="h-2 w-3"><path d="M0 2h3l1-2 2 2h3l1-1 2 1v6H0z" /></svg>
        </span>
        <span className="flex w-[17px] justify-center">
          <svg viewBox="0 0 12 12" className="size-3" fill="none" stroke="currentColor"><path d="M3 1.500h8.500v7H3M5 11h5M1 1v10h2" /></svg>
        </span>
        <span className="flex w-[17px] justify-center">
          <svg viewBox="0 0 12 10" className="h-2.5 w-3" fill="none" stroke="#777"><path d="M1 4h2l3-3v8L3 6H1zM8 3c1 1 1 3 0 4M10 1c2 2 2 6 0 8" /></svg>
        </span>
        <span className="ml-4 w-[17px] text-center text-[10px] leading-3 text-[#888]">中</span>
        <span className="ml-0.5 flex w-[17px] justify-center"><SogouS className="size-[11px]" /></span>
        <div className="mr-[15px] ml-3 text-center font-['Open_Sans',sans-serif] text-[9px] leading-3 whitespace-nowrap">
          <p>11:11</p>
          <p>2020/9/4</p>
        </div>
        <svg viewBox="0 0 12 12" className="size-3" fill="none" stroke="currentColor"><path d="M1 1h10v8l-2 2H1zM3 4h6M3 6h6M3 8h3" /></svg>
        <svg viewBox="0 0 12 12" className="ml-4 size-3" fill="none" stroke="currentColor"><path d="M.5 1.500h11v8H8l-2 2-2-2H.5z" /></svg>
      </div>
      <span className="pointer-events-none absolute right-2.5 bottom-2 font-['Liberation_Sans',sans-serif] text-[16px] leading-5 whitespace-nowrap text-white/75">
        https://blog.csdn.net/GstarCAD2020
      </span>
    </footer>
  );
}

export default function App() {
  return (
    <div className="flex h-screen flex-col overflow-hidden bg-[#bbd8fc] font-['Noto_Sans_CJK_SC',sans-serif]">
      <TitleArea />
      <Toolbars />
      <main className="flex min-h-0 flex-1 pb-[3px]">
        <div className={COLUMN}>
          <TopGrip />
          <ToolColumn names={LEFT_TOOLS} height="h-[331px]" />
        </div>
        <span className="w-0.5 shrink-0 bg-[#dce9fb]" />
        <DrawingArea />
        <span className="w-0.5 shrink-0" />
        <div className={COLUMN}>
          <TopGrip />
          <ToolColumn names={RIGHT_TOOLS} height="h-[268px]" />
          <TopGrip />
          <span className="h-1" />
          <ToolColumn names={['orderA', 'orderB', 'orderC', 'orderD']} height="h-[63px]" />
          <span className="h-[5px]" />
          <ToolColumn names={['flag', 'stack']} height="h-[31px]" />
        </div>
        <span className="w-0.5 shrink-0" />
        <Palette />
      </main>
      <CommandLine />
      <StatusBar />
      <Taskbar />
    </div>
  );
}
